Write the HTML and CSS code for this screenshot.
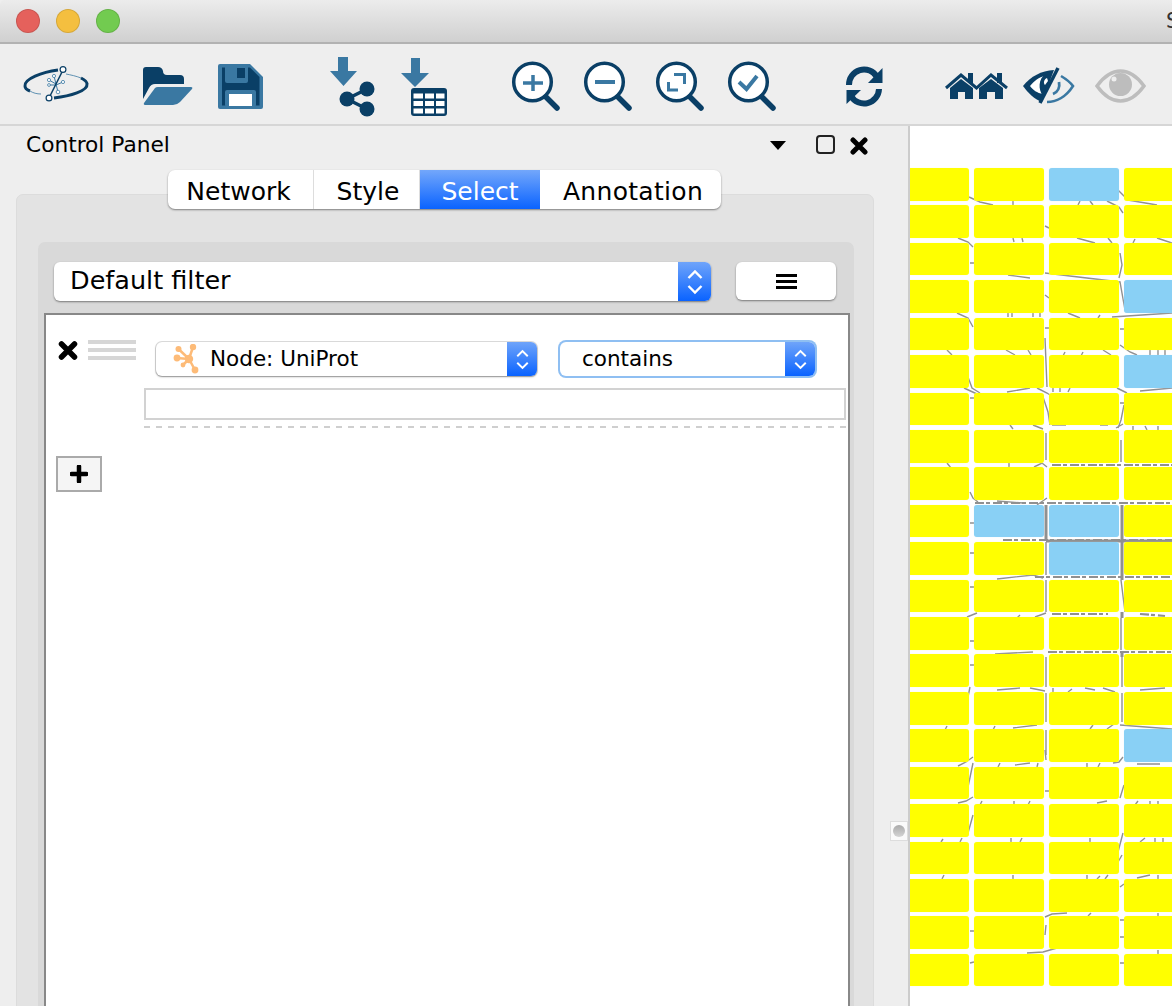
FILE: index.html
```html
<!DOCTYPE html>
<html lang="en">

<head>
    <meta charset="UTF-8">
    <title>Cytoscape</title>
    <link rel="stylesheet" href="styles.css">
</head>

<body>
    <svg class="defs" width="0" height="0">
        <symbol id="chevrons" viewBox="0 0 16 26">
            <path d="M1.5 9 L8 2.5 L14.500 9 M1.500 17 L8 23.500 L14.500 17" fill="none" stroke="#fff" stroke-width="2.400" />
        </symbol>
    </svg>

    <div class="titlebar">
        <span class="light red"></span>
        <span class="light yellow"></span>
        <span class="light green"></span>
        <span class="window-title">Session: New Session</span>
    </div>

    <div class="toolbar">
        <!-- logo -->
        <svg class="tool w72" viewBox="20 54 72 64">
            <path d="M58 70 C42 72 24 79 25 86 C25 88 27 90 30 91" fill="none" class="s-dark" stroke-width="3" />
            <path d="M30 91 C33 93 37 94 41 94" fill="none" class="s-mid" stroke-width="0.800" />
            <path d="M54 98 C70 96 88 91 87 84 C87 82 85 80 81 78" fill="none" class="s-dark" stroke-width="3" />
            <path d="M81 78 C76 76 71 75 66 74" fill="none" class="s-mid" stroke-width="0.800" />
            <path d="M54 76 L56 84 M49 80 L56 84 M49 85 H56 L63 82 M56 84 L58 92" fill="none" class="s-mid" stroke-width="1" />
            <circle cx="54" cy="76" r="1.600" class="ring" />
            <circle cx="49" cy="80" r="1.600" class="ring" />
            <circle cx="49" cy="85" r="1.400" class="ring" />
            <circle cx="63" cy="82" r="1.600" class="ring" />
            <circle cx="58" cy="92" r="1.800" class="ring" />
            <path d="M50 96 L62 72" class="s-dark" stroke-width="1.500" />
            <circle cx="63" cy="69.500" r="2.900" fill="#fff" class="s-dark" stroke-width="1.200" />
            <circle cx="49" cy="98" r="2.900" fill="#fff" class="s-dark" stroke-width="1.200" />
        </svg>

        <div class="tool-group file">
            <svg class="tool w56" viewBox="140 54 56 64">
                <path class="f-dark" d="M143 70 Q143 67 146 67 H158 Q162 67 163 71 Q163 75 167 75 H180 Q184 75 184 79 V84 H155 Q151 84 149 88 L143 99 Z" />
                <path class="f-mid" d="M155 88 Q156 87 158 87 H191 Q193 87 192 89 L180 102 Q177 105 173 105 H146 Q143 105 144 103 Z" />
            </svg>
            <svg class="tool w54" viewBox="214 54 54 64">
                <path class="f-mid" d="M220 64 H250 L263 77 V107 Q263 109 261 109 H220 Q218 109 218 107 V66 Q218 64 220 64 Z" />
                <path class="f-dark" d="M222 67.500 H250 L259.500 77 V105.500 H222 Z" />
                <rect class="f-mid" x="225" y="65" width="23" height="18" rx="2" />
                <rect class="f-dark" x="237" y="68" width="8" height="10" />
                <rect class="f-mid" x="225" y="90" width="31" height="17" rx="2" />
                <rect x="229" y="94" width="23" height="12" fill="#fff" />
            </svg>
        </div>

        <div class="tool-group import">
            <svg class="tool w54" viewBox="326 54 54 64">
                <path class="f-mid" d="M338 57 H348 V71 H357 L343.500 86 L330 71 H338 Z" />
                <path d="M367 89 L347 99 L367 109" fill="none" class="s-dark" stroke-width="3.500" />
                <circle class="f-dark" cx="367" cy="89" r="7.500" />
                <circle class="f-dark" cx="347" cy="99" r="7.500" />
                <circle class="f-dark" cx="367" cy="109" r="7.500" />
            </svg>
            <svg class="tool w52" viewBox="398 54 52 64">
                <path class="f-mid" d="M411 58 H420 V73 H429 L415 87 L401 73 H411 Z" />
                <rect class="f-dark" x="411" y="88" width="36" height="28" rx="3" />
                <path fill="#fff" d="M413.500 93.500 h9.500 v5 h-9.500 z M425 93.500 h9 v5 h-9 z M436 93.500 h8.500 v5 h-8.500 z M413.500 101 h9.500 v5 h-9.500 z M425 101 h9 v5 h-9 z M436 101 h8.500 v5 h-8.500 z M413.500 108.500 h9.500 v5 h-9.500 z M425 108.500 h9 v5 h-9 z M436 108.500 h8.500 v5 h-8.500 z" />
            </svg>
        </div>

        <div class="tool-group zoom">
            <svg class="tool w56" viewBox="508 54 56 64">
                <circle class="lens" cx="532.500" cy="82" r="18.800" />
                <path class="handle" d="M546 97 L557 108" />
                <path class="s-mid" stroke-width="3.500" d="M523 83 H543 M533 75 V91" />
            </svg>
            <svg class="tool w56" viewBox="580 54 56 64">
                <circle class="lens" cx="604.500" cy="82" r="18.800" />
                <path class="handle" d="M618 97 L629 108" />
                <path class="s-mid" stroke-width="4" d="M595 82 H615" />
            </svg>
            <svg class="tool w56" viewBox="652 54 56 64">
                <circle class="lens" cx="676.500" cy="82" r="18.800" />
                <path class="handle" d="M690 97 L701 108" />
                <path class="s-mid" fill="none" stroke-width="3" d="M674 74.500 H684.500 V84 M668.500 82 V90 H678" />
            </svg>
            <svg class="tool w56" viewBox="724 54 56 64">
                <circle class="lens" cx="748.500" cy="82" r="18.800" />
                <path class="handle" d="M762 97 L773 108" />
                <path class="s-mid" fill="none" stroke-width="4" d="M739 82 L746.500 89 L757 76" />
            </svg>
        </div>

        <div class="tool-group refresh">
            <svg class="tool w48" viewBox="840 54 48 64">
                <path d="M849 85 A15 15 0 0 1 877 77" fill="none" class="s-dark" stroke-width="6" />
                <path class="f-dark" d="M882.500 68 V83 H868 Z" />
                <path d="M879 89 A15 15 0 0 1 851 96" fill="none" class="s-dark" stroke-width="6" />
                <path class="f-dark" d="M846.500 104 V90 H861 Z" />
            </svg>
        </div>

        <div class="tool-group vis">
            <svg class="tool w70" viewBox="942 54 70 64">
                <path class="f-dark" d="M968 73 h5 v10 h-5 z M997 73 h5 v10 h-5 z" />
                <path fill="none" class="s-dark" stroke-width="3" d="M946 88 L961 75 L976.500 88 L991 75 L1007 88" />
                <path class="f-dark" d="M950 99 V88 L961 79 L973 88 V99 H965 V92 H958 V99 Z" />
                <path class="f-dark" d="M979 99 V88 L991 79 L1003 88 V99 H995 V92 H987 V99 Z" />
            </svg>
            <svg class="tool w58" viewBox="1020 54 58 64">
                <path class="f-dark" d="M1023 86 C1031 76 1041 71 1054 70 L1042 102 C1034 99 1028 93 1023 86 Z" />
                <path fill="#fff" d="M1030 86 C1034 81 1039 77 1045 76 C1040 82 1040 90 1043 94 C1037 93 1033 90 1030 86 Z" />
                <path class="f-dark" d="M1046 74 C1038 78 1038 90 1043 96 L1051 76 Z" />
                <path fill="#fff" d="M1047 78 C1044 79 1043 83 1045 85 L1048 81 Z" />
                <path d="M1058 68 L1040 103" class="s-dark" stroke-width="3.500" />
                <path d="M1061 76 C1066 79 1070 82 1073 86 C1066 97 1056 102 1047 102" fill="none" class="s-mid" stroke-width="2.600" />
                <path d="M1059 82 C1060 87 1058 92 1053 94" fill="none" class="s-mid" stroke-width="2.800" />
            </svg>
            <svg class="tool w56 eye" viewBox="1092 54 56 64">
                <path d="M1097 86 C1105 75 1113 71 1120.500 71 C1128 71 1136 75 1144 86 C1136 97 1128 101 1120.500 101 C1113 101 1105 97 1097 86 Z" fill="none" stroke="#bdbdbd" stroke-width="3.500" />
                <circle cx="1120.500" cy="84.500" r="11.500" fill="#bdbdbd" />
                <circle cx="1114" cy="79" r="2.500" fill="#eee" />
            </svg>
        </div>
    </div>

    <div class="main">
        <div class="side">
            <div class="panel-head">
                <span class="panel-title">Control Panel</span>
                <span class="float-arrow"></span>
                <span class="float-box"></span>
                <svg class="close-x" viewBox="0 0 18 18">
                    <path d="M3 3 L15 15 M15 3 L3 15" stroke="#000" stroke-width="5" stroke-linecap="round" />
                </svg>
            </div>

            <div class="tabs">
                <div class="tab w-network">Network</div>
                <div class="tab w-style">Style</div>
                <div class="tab w-select active">Select</div>
                <div class="tab w-annotation">Annotation</div>
            </div>

            <div class="tab-panel">
                <div class="filter-panel">
                    <div class="filter-top">
                        <div class="combo big">
                            <span class="combo-text">Default filter</span>
                            <span class="stepper big-step"><svg width="16" height="26"><use href="#chevrons" /></svg></span>
                        </div>
                        <div class="menu-btn"><span></span><span></span><span></span></div>
                    </div>

                    <div class="filter-body">
                        <div class="filter-row">
                            <svg class="del-x" viewBox="0 0 20 20">
                                <path d="M3.500 3.500 L16.500 16.500 M16.500 3.500 L3.500 16.500" stroke="#000" stroke-width="5.500" stroke-linecap="round" />
                            </svg>
                            <div class="grip"><span></span><span></span><span></span></div>
                            <div class="row-fields">
                                <div class="field-selects">
                                    <div class="combo attr">
                                        <svg class="node-icon" viewBox="174 344 26 30">
                                            <path d="M194 347 L190 359 L179.500 349 M178 358 L190 359 L184 365 M190 359 L196 370" fill="none" stroke="#fdbb78" stroke-width="2.500" />
                                            <circle cx="194" cy="347" r="3.200" />
                                            <circle cx="179.500" cy="349" r="3" />
                                            <circle cx="178" cy="358" r="3.400" />
                                            <circle cx="190" cy="359" r="4.200" />
                                            <circle cx="184" cy="365" r="2.400" />
                                            <circle cx="196" cy="370" r="3.400" />
                                        </svg>
                                        <span class="combo-text">Node: UniProt</span>
                                        <span class="stepper small-step"><svg width="13" height="21"><use href="#chevrons" /></svg></span>
                                    </div>
                                    <div class="combo oper">
                                        <span class="combo-text">contains</span>
                                        <span class="stepper small-step"><svg width="13" height="21"><use href="#chevrons" /></svg></span>
                                    </div>
                                </div>
                                <input class="value-input" type="text">
                                <div class="dashes"></div>
                            </div>
                        </div>
                        <div class="add-btn">
                            <svg width="18" height="18" viewBox="0 0 18 18">
                                <path d="M9 1.500 V16.500 M1.500 9 H16.500" stroke="#000" stroke-width="4.500" stroke-linecap="round" />
                            </svg>
                        </div>
                    </div>
                </div>
            </div>

            <div class="splitter"><span></span></div>
        </div>

        <div class="canvas">
            <!-- edges sit under the nodes, only the bits in the gaps show -->
            <svg class="edges" viewBox="910 126 262 880">
                <path class="edge" d="M969 197 L980 202 L993 205 M1013 201 v4 M1080 201 l-2 4 M1090 201 l3 4 M1107 201 L1119 207 L1123 213 M1118 190 L1128 200 L1157 205
                    M958 238 L968 242 L973 247 M1013 238 l1 4 M1022 238 l1 4 M1077 238 L1095 243 M1108 238 l4 5 M1135 239 l-2 4 M1157 238 L1172 243
                    M970 263 h4 M1045 226 l4 2 M1120 253 L1122 265 L1119 278 M1008 275 L1030 278 M1045 273 L1120 282 L1125 310 M1045 295 l4 3
                    M957 313 L968 318 L973 327 M1008 313 v4 M1012 313 v4 M1033 313 v4 M1040 313 v4 M1068 313 L1080 318 M1100 315 l-2 3 M1112 317 L1172 313
                    M1045 328 h4 M1120 329 h4 M1045 338 L1047 387 M1120 345 L1130 352 L1137 355 M947 350 l5 5 M1006 350 L1015 355 M1028 350 l3 5 M1065 352 l-2 4 M1083 352 l-2 4 M1103 350 L1111 355 M1150 350 v5 M1158 350 v5 M1165 350 v5
                    M968 377 L972 388 L980 393 M964 388 L977 394 M1007 392 L1030 388 M1037 388 L1047 393 L1050 395 M1053 388 v4 M1060 388 v4 M1070 388 l-2 4 M1117 388 L1127 393 M1140 391 L1172 388
                    M1043 397 L1048 412 L1050 425 M1120 403 h4 M1124 405 L1121 420 L1118 428 M970 398 h4
                    M1010 425 l3 4 M1033 425 L1043 429 M1052 425 h14 M1100 425 h8 M1116 428 L1123 424 M1133 426 v4 M1145 426 l2 4 M1158 426 v4" />
                <path class="edge" d="M947 463 l4 5 M1009 462 v5 M1046 433 V460 M1121 440 V462 M1034 467 L1042 463 L1047 467 M970 492 L973 498 L978 502 M997 501 L1023 503 M1037 505 L1047 498 M970 523 h4 M970 553 h4 M970 587 h4
                    M997 579 L1033 575 L1043 578 M1046 542 V575 M1046 580 V612 M1121 580 L1125 612 M967 617 L977 613 M1020 615 l-3 3 M1035 617 L1046 613 M970 641 h4 M970 665 h4 M1121 618 V650
                    M995 654 L1033 652 M1046 657 V687 M1122 657 V687 M970 687 L968 697 M997 690 L1020 688 M1030 688 L1045 691 M1053 688 v4 M1068 692 l4 -3 M1085 688 L1095 690 M1103 688 L1115 692 M1140 690 L1165 688 M1046 693 V722 M1122 693 V722
                    M947 726 l-2 4 M995 726 l-2 4 M1013 728 L1037 725 M1090 729 l3 -4 M1107 729 L1114 724 M1046 755 V730 M1120 725 L1172 729" />
                <path class="edge" d="M973 757 L966 762 L958 766 M973 763 L968 787 M1000 763 l-2 4 M1015 765 L1030 763 M1038 763 l-1 4 M1113 763 L1119 762 L1123 757 M1087 763 v4 M1100 763 l-2 4 M1137 764 L1160 764 M1045 750 L1046 760
                    M1120 798 L1124 785 M1045 791 h4 M958 803 L966 801 L973 797 M982 801 l-2 4 M1014 801 v4 M1030 801 l-2 4 M1097 803 L1107 801 M1135 805 l3 -4 M1150 801 v4 M1158 801 v4
                    M973 815 L968 833 M943 839 l-2 3 M962 838 l-2 4 M1011 838 v4 M1022 838 l-2 4 M1090 838 v4 M1123 833 L1118 852 M1140 842 L1145 838 M1155 838 v4 M1163 838 v4 M1122 855 L1118 862
                    M944 875 l-2 4 M1013 875 v4 M1087 875 v4 M1100 876 l-3 3 M1108 875 l-3 4 M1120 887 l4 -3 M1137 878 L1150 875 M1158 875 v4
                    M1045 917 L1052 914 L1067 913 M1091 913 l-3 3 M1046 925 L1045 935 M1120 920 h4 M1120 937 h4 M1158 913 v4 M1150 917 H1172 M970 931 h4 M1027 953 L1043 952 L1057 948 M1158 950 v4 M970 963 l4 -1 M1120 963 h4" />
                <path class="edge-busy" d="M975 503 H1172 M1003 540 H1172 M1035 577 H1172 M1052 614 H1108 M1140 614 L1165 616 M1048 652 H1172 M1052 465 H1172" />
                <path class="edge-heavy" d="M1046 505 V540 M1122 505 V580 M1046 541 H1172 M1122 612 V618 M1122 652 V657" />
            </svg>

            <div class="nodes">
                <!-- rows 1-22, four columns -->
                <div class="node"></div><div class="node"></div><div class="node sel"></div><div class="node"></div>
                <div class="node"></div><div class="node"></div><div class="node"></div><div class="node"></div>
                <div class="node"></div><div class="node"></div><div class="node"></div><div class="node"></div>
                <div class="node"></div><div class="node"></div><div class="node"></div><div class="node sel"></div>
                <div class="node"></div><div class="node"></div><div class="node"></div><div class="node"></div>
                <div class="node"></div><div class="node"></div><div class="node"></div><div class="node sel"></div>
                <div class="node"></div><div class="node"></div><div class="node"></div><div class="node"></div>
                <div class="node"></div><div class="node"></div><div class="node"></div><div class="node"></div>
                <div class="node"></div><div class="node"></div><div class="node"></div><div class="node"></div>
                <div class="node"></div><div class="node sel"></div><div class="node sel"></div><div class="node"></div>
                <div class="node"></div><div class="node"></div><div class="node sel"></div><div class="node"></div>
                <div class="node"></div><div class="node"></div><div class="node"></div><div class="node"></div>
                <div class="node"></div><div class="node"></div><div class="node"></div><div class="node"></div>
                <div class="node"></div><div class="node"></div><div class="node"></div><div class="node"></div>
                <div class="node"></div><div class="node"></div><div class="node"></div><div class="node"></div>
                <div class="node"></div><div class="node"></div><div class="node"></div><div class="node sel"></div>
                <div class="node"></div><div class="node"></div><div class="node"></div><div class="node"></div>
                <div class="node"></div><div class="node"></div><div class="node"></div><div class="node"></div>
                <div class="node"></div><div class="node"></div><div class="node"></div><div class="node"></div>
                <div class="node"></div><div class="node"></div><div class="node"></div><div class="node"></div>
                <div class="node"></div><div class="node"></div><div class="node"></div><div class="node"></div>
                <div class="node"></div><div class="node"></div><div class="node"></div><div class="node"></div>
            </div>
        </div>
    </div>
</body>

</html>
```

FILE: styles.css
```css
* {
    font-family: "DejaVu Sans", sans-serif;
    box-sizing: border-box;
}

html,
body {
    height: 100%;
    padding: 0;
    margin: 0;
}

body {
    width: 1172px;
    height: 1006px;
    overflow: hidden;
    display: flex;
    flex-direction: column;
    background-color: #eee;
    color: #000;
}

.defs {
    position: absolute;
}

/* window title */
.titlebar {
    height: 44px;
    flex: none;
    display: flex;
    align-items: center;
    gap: 16px;
    padding-left: 16px;
    overflow: hidden;
    background: linear-gradient(#ececec, #d0d0d0);
    border-bottom: 2px solid #b2b2b2;
    border-top-left-radius: 5px;
}

.light {
    flex: none;
    width: 24px;
    height: 24px;
    border-radius: 50%;
    border: 1px solid rgba(0, 0, 0, 0.12);
}

.light.red {
    background-color: #e5615c;
}

.light.yellow {
    background-color: #f4bf3f;
}

.light.green {
    background-color: #72cb50;
}

.window-title {
    flex: none;
    margin-left: 1030px;
    font-size: 21px;
    color: #333;
    white-space: nowrap;
}

/* toolbar */
.toolbar {
    height: 82px;
    flex: none;
    display: flex;
    align-items: flex-start;
    padding: 10px 0 0 20px;
    background-color: #eee;
    border-bottom: 2px solid #d6d6d6;
}

.tool {
    display: block;
    flex: none;
    height: 64px;
}

.w48 { width: 48px; }
.w52 { width: 52px; }
.w54 { width: 54px; }
.w56 { width: 56px; }
.w58 { width: 58px; }
.w70 { width: 70px; }
.w72 { width: 72px; }

.tool-group {
    display: flex;
    flex: none;
}

.tool-group.file {
    margin-left: 48px;
    gap: 18px;
}

.tool-group.import {
    margin-left: 58px;
    gap: 18px;
}

.tool-group.zoom {
    margin-left: 58px;
    gap: 16px;
}

.tool-group.refresh {
    margin-left: 60px;
}

.tool-group.vis {
    margin-left: 54px;
    gap: 8px;
}

.tool.eye {
    margin-left: 6px;
}

.f-dark { fill: #0a3f66; }
.f-mid { fill: #3a78a2; }
.s-dark { stroke: #0a3f66; }
.s-mid { stroke: #3a78a2; }

.ring {
    fill: #fff;
    stroke: #3a78a2;
    stroke-width: 0.8;
}

.lens {
    fill: #fff;
    stroke: #0a3f66;
    stroke-width: 3.5;
}

.handle {
    stroke: #0a3f66;
    stroke-width: 5.5;
    stroke-linecap: round;
}

/* main area */
.main {
    flex: 1;
    min-height: 0;
    display: flex;
}

.side {
    position: relative;
    width: 910px;
    flex: none;
    display: flex;
    flex-direction: column;
    overflow: hidden;
    background-color: #eee;
    border-right: 2px solid #ccc;
}

.panel-head {
    height: 44px;
    flex: none;
    display: flex;
    align-items: center;
    padding: 0 40px 8px 26px;
}

.panel-title {
    font-size: 21.7px;
    margin-right: auto;
}

.float-arrow {
    width: 0;
    height: 0;
    margin-top: 3px;
    border-left: 8px solid transparent;
    border-right: 8px solid transparent;
    border-top: 9px solid #000;
}

.float-box {
    width: 19px;
    height: 19px;
    margin-left: 30px;
    border: 2px solid #222;
    border-radius: 4px;
}

.close-x {
    width: 18px;
    height: 18px;
    margin-left: 15px;
    margin-top: 3px;
}

/* tabs */
.tabs {
    display: flex;
    flex: none;
    align-self: flex-start;
    height: 39px;
    margin: 0 0 -15px 168px;
    position: relative;
    z-index: 1;
    border-radius: 7px;
    background-color: #fff;
    box-shadow: 0 1px 2px rgba(0, 0, 0, 0.45);
    overflow: hidden;
}

.tab {
    display: flex;
    align-items: center;
    justify-content: center;
    padding-top: 3px;
    font-size: 25px;
    border-right: 1px solid #ddd;
}

.tab:last-child {
    border-right: none;
}

.tab.active {
    color: #fff;
    background: linear-gradient(#73a7fb, #0a63ff);
    border-right: none;
}

.w-network {
    width: 146px;
    padding-right: 4px;
}

.w-style {
    width: 106px;
    padding-left: 3px;
}

.w-select {
    width: 120px;
}

.w-annotation {
    width: 181px;
    padding-left: 5px;
    letter-spacing: 0.3px;
}

.tab-panel {
    flex: 1;
    min-height: 0;
    display: flex;
    flex-direction: column;
    width: 858px;
    margin: 0 0 -30px 16px;
    padding: 47px 19px 0 21px;
    background-color: #e3e3e3;
    border: 1px solid #dcdcdc;
    border-radius: 7px;
}

.filter-panel {
    flex: 1;
    min-height: 0;
    display: flex;
    flex-direction: column;
    padding-top: 20px;
    background-color: #d9d9d9;
    border-radius: 7px;
}

.filter-top {
    display: flex;
    gap: 25px;
    padding: 0 18px 0 16px;
    margin-bottom: 12px;
}

/* combo boxes */
.combo {
    display: flex;
    align-items: center;
    background-color: #fff;
    border-radius: 6px;
    box-shadow: 0 1px 2px rgba(0, 0, 0, 0.45);
    overflow: hidden;
}

.combo.big {
    width: 657px;
    height: 39px;
    padding-left: 16px;
    font-size: 25.5px;
}

.combo-text {
    margin-right: auto;
    white-space: nowrap;
}

.big .combo-text {
    padding-bottom: 3px;
}

.attr .combo-text,
.oper .combo-text {
    padding-bottom: 2px;
}

.stepper {
    display: flex;
    align-items: center;
    justify-content: center;
    flex: none;
    align-self: stretch;
    background: linear-gradient(#6fa4fa, #0a63ff);
}

.big-step {
    width: 33px;
}

.small-step {
    width: 30px;
}

.menu-btn {
    width: 100px;
    height: 38px;
    display: flex;
    flex-direction: column;
    align-items: center;
    justify-content: center;
    gap: 3px;
    background-color: #fff;
    border-radius: 6px;
    box-shadow: 0 1px 2px rgba(0, 0, 0, 0.45);
}

.menu-btn span {
    width: 21px;
    height: 3px;
    background-color: #000;
}

/* filter rows */
.filter-body {
    flex: 1;
    min-height: 0;
    margin: 0 4px 0 6px;
    padding: 25px 0 0 12px;
    background-color: #fff;
    border: 2px solid #888;
    border-bottom: none;
}

.filter-row {
    display: flex;
    align-items: flex-start;
}

.del-x {
    width: 20px;
    height: 21px;
    flex: none;
}

.grip {
    width: 48px;
    flex: none;
    margin-left: 10px;
    display: flex;
    flex-direction: column;
    gap: 4px;
}

.grip span {
    height: 4px;
    background-color: #d6d6d6;
}

.row-fields {
    width: 702px;
    flex: none;
    margin-left: 8px;
}

.field-selects {
    display: flex;
    gap: 23px;
    padding: 2px 0 0 12px;
}

.combo.attr {
    width: 381px;
    height: 34px;
    padding-left: 17px;
    font-size: 21.5px;
    box-shadow: 0 1px 2px rgba(0, 0, 0, 0.35), 0 0 0 1px #ddd;
}

.node-icon {
    width: 26px;
    height: 30px;
    flex: none;
    margin-right: 11px;
    fill: #fdbb78;
}

.combo.oper {
    width: 255px;
    height: 34px;
    padding-left: 22px;
    font-size: 21.5px;
    box-shadow: 0 0 0 2px #8fbff2;
}

.value-input {
    display: block;
    width: 702px;
    height: 32px;
    margin: 12px 0 0;
    padding: 0;
    border: 2px solid #d2d2d2;
    outline: none;
}

.dashes {
    height: 2px;
    margin-top: 6px;
    background: repeating-linear-gradient(90deg, #cfcfcf 0 6px, transparent 6px 12px);
}

.add-btn {
    width: 46px;
    height: 36px;
    margin: 28px 0 0 -2px;
    display: flex;
    align-items: center;
    justify-content: center;
    background-color: #f5f5f5;
    border: 2px solid #aaa;
}

.splitter {
    position: absolute;
    left: 890px;
    top: 695px;
    width: 18px;
    height: 20px;
    display: flex;
    align-items: center;
    justify-content: center;
    background-color: #fafafa;
    border: 1px solid #ddd;
}

.splitter span {
    width: 12px;
    height: 12px;
    border-radius: 50%;
    background: linear-gradient(#aaa, #d4d4d4);
}

/* network view */
.canvas {
    flex: 1;
    position: relative;
    z-index: 0;
    overflow: hidden;
    background-color: #fff;
}

.edges {
    position: absolute;
    left: 0;
    top: 0;
    width: 262px;
    height: 880px;
    z-index: -1;
}

.edge,
.edge-busy,
.edge-heavy {
    fill: none;
    stroke: #909090;
}

.edge {
    stroke-width: 1.4;
}

.edge-busy {
    stroke-width: 2.2;
    stroke-dasharray: 9 2 4 3;
}

.edge-heavy {
    stroke-width: 3;
}

.nodes {
    display: grid;
    grid-template-columns: repeat(4, 70px);
    grid-auto-rows: 32.6px;
    column-gap: 5px;
    row-gap: 4.83px;
    margin: 42px 0 0 -11px;
}

.node {
    background-color: #ff0;
    border-radius: 3px;
    box-shadow: 0 0 1px #ffff9c;
}

.node.sel {
    background-color: #89d0f5;
    box-shadow: 0 0 1px #c5e8fa;
}
```
